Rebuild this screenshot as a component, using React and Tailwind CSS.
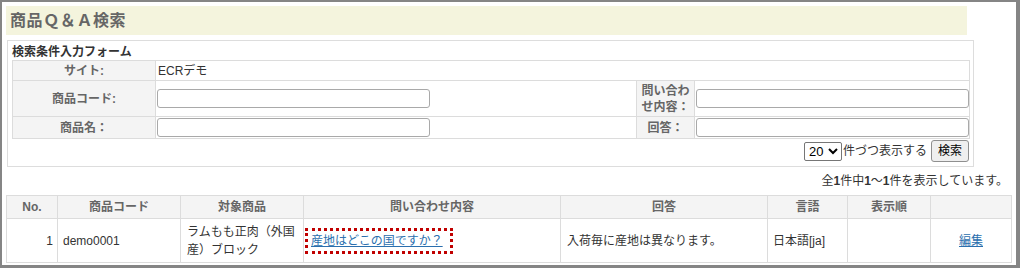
import React from "react";

const FONT = { fontFamily: '"Liberation Sans", "Noto Sans CJK JP", sans-serif' };

const ResultHeader = ({ children }) => (
  <th className="border border-[#dcdcdc] bg-[#f4f4f4] text-[12px] font-bold text-[#666] text-center h-[23px] p-0 leading-[16px]">
    {children}
  </th>
);

const Cell = ({ children, className = "", ...rest }) => (
  <td
    {...rest}
    className={`border border-[#dcdcdc] text-[12px] text-[#333] leading-[18px] align-middle py-0 ${className}`}
  >
    {children}
  </td>
);

const Label = ({ children, className = "" }) => (
  <td className={`border border-[#dcdcdc] bg-[#f4f4f4] text-[12px] font-bold text-[#666] text-center leading-[16px] p-0 ${className}`}>
    {children}
  </td>
);

const TextInput = () => (
  <input
    type="text"
    className="block w-[273px] h-[19px] border border-[#a9a9a9] rounded-[3px] bg-white"
  />
);

export default function App() {
  return (
    <div
      className="w-[1020px] h-[268px] bg-white border-l-2 border-t-2 border-r-4 border-b-[3px] border-[#858585] overflow-hidden"
      style={FONT}
    >
      <div className="pt-[4px]">
        {/* Title */}
        <div className="ml-[4px] w-[961px] h-[29px] bg-[#f4f4dd] flex items-center pl-[4px]">
          <h1 className="text-[16px] font-bold text-[#666] tracking-[0.6px] leading-none">
            商品Ｑ＆Ａ検索
          </h1>
        </div>

        {/* Search form */}
        <div className="mt-[5px] ml-[5px] w-[967px] h-[127px] border border-[#dddddd] pl-[4px]">
          <div className="pt-[3px] h-[19px] text-[12px] font-bold text-[#333] leading-[16px]">
            検索条件入力フォーム
          </div>
          <table className="table-fixed border-collapse w-[957px]">
            <colgroup>
              <col className="w-[143px]" />
              <col className="w-[481px]" />
              <col className="w-[58px]" />
              <col className="w-[275px]" />
            </colgroup>
            <tbody>
              <tr>
                <Label className="h-[20px]">サイト:</Label>
                <Cell className="pl-[2px]" colSpan={3}>
                  ECRデモ
                </Cell>
              </tr>
              <tr>
                <Label className="h-[36px]">商品コード:</Label>
                <td className="border border-[#dcdcdc] px-[1px]">
                  <TextInput />
                </td>
                <Label className="px-[4px]">問い合わせ内容：</Label>
                <td className="border border-[#dcdcdc] px-[1px]">
                  <TextInput />
                </td>
              </tr>
              <tr>
                <Label className="h-[22px]">商品名：</Label>
                <td className="border border-[#dcdcdc] px-[1px]">
                  <TextInput />
                </td>
                <Label>回答：</Label>
                <td className="border border-[#dcdcdc] px-[1px]">
                  <TextInput />
                </td>
              </tr>
            </tbody>
          </table>
          <div className="w-[957px] flex justify-end items-center mt-[1px]">
            <select
              defaultValue="20"
              className="w-[38px] h-[19px] text-[13px] text-black border border-[#767676] rounded-[2px] bg-white"
            >
              <option value="10">10</option>
              <option value="20">20</option>
              <option value="50">50</option>
              <option value="100">100</option>
            </select>
            <span className="text-[12px] text-[#333] ml-[1px]">件づつ表示する</span>
            <button className="ml-[4px] h-[22px] px-[6px] text-[12px] text-black bg-[#efefef] border border-[#8f8f8f] rounded-[3px]">
              検索
            </button>
          </div>
        </div>

        {/* Count */}
        <div className="h-[28px] flex items-center justify-end pr-[8px] text-[12px] text-[#333]">
          <span>
            全<b>1</b>件中<b>1</b>〜<b>1</b>件を表示しています。
          </span>
        </div>

        {/* Result table */}
        <table className="ml-[4px] table-fixed border-collapse w-[1005px]">
          <colgroup>
            <col className="w-[51px]" />
            <col className="w-[123px]" />
            <col className="w-[123px]" />
            <col className="w-[257px]" />
            <col className="w-[207px]" />
            <col className="w-[80px]" />
            <col className="w-[83px]" />
            <col className="w-[81px]" />
          </colgroup>
          <thead>
            <tr>
              <ResultHeader>No.</ResultHeader>
              <ResultHeader>商品コード</ResultHeader>
              <ResultHeader>対象商品</ResultHeader>
              <ResultHeader>問い合わせ内容</ResultHeader>
              <ResultHeader>回答</ResultHeader>
              <ResultHeader>言語</ResultHeader>
              <ResultHeader>表示順</ResultHeader>
              <ResultHeader></ResultHeader>
            </tr>
          </thead>
          <tbody>
            <tr>
              <Cell className="h-[44px] text-right pr-[4px]">1</Cell>
              <Cell className="pl-[5px]">demo0001</Cell>
              <Cell className="px-[6px]">ラムもも正肉（外国産）ブロック</Cell>
              <Cell className="pl-[1px]">
                <span className="inline-block border-[3px] border-dotted border-[#c00000] pl-[3px] pr-[7px] py-[1px]">
                  <a href="#" className="text-[#2b6fae] underline">
                    産地はどこの国ですか？
                  </a>
                </span>
              </Cell>
              <Cell className="pl-[6px]">入荷毎に産地は異なります。</Cell>
              <Cell className="pl-[5px]">日本語[ja]</Cell>
              <Cell></Cell>
              <Cell className="text-center">
                <a href="#" className="text-[#2b6fae] underline">
                  編集
                </a>
              </Cell>
            </tr>
          </tbody>
        </table>
      </div>
    </div>
  );
}
